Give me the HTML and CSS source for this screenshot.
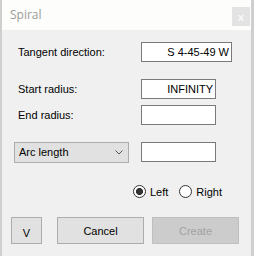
FILE: index.html
```html
<!DOCTYPE html>
<html lang="en">
<head>
    <meta charset="UTF-8">
    <meta name="viewport" content="width=device-width, initial-scale=1.0">
    <title>Spiral</title>
    <link rel="stylesheet" href="styles.css">
</head>
<body>

    <div class="dialog">
        <div class="title-bar">
            <span class="title">Spiral</span>
            <span class="close-btn">x</span>
        </div>

        <div class="content">
            <div class="row">
                <span class="label">Tangent direction:</span>
                <input class="text-box wide" type="text" value="S 4-45-49 W">
            </div>

            <div class="row gap-big">
                <span class="label">Start radius:</span>
                <input class="text-box" type="text" value="INFINITY">
            </div>

            <div class="row gap-small">
                <span class="label">End radius:</span>
                <input class="text-box" type="text" value="">
            </div>

            <div class="row gap-big">
                <div class="combo">
                    <span>Arc length</span>
                    <svg width="8" height="5" viewBox="0 0 8 5">
                        <polyline points="0.5,0.5 4,4 7.5,0.5" fill="none" stroke="#555" stroke-width="1"/>
                    </svg>
                </div>
                <input class="text-box" type="text" value="">
            </div>

            <div class="radio-row">
                <label class="radio"><span class="dot checked"></span>Left</label>
                <label class="radio"><span class="dot"></span>Right</label>
            </div>

            <div class="button-row">
                <button class="btn small">V</button>
                <button class="btn">Cancel</button>
                <button class="btn disabled">Create</button>
            </div>
        </div>
    </div>

</body>
</html>
```

FILE: styles.css
```css
/* Nền phía sau hộp thoại */
body {
    margin: 0;
    background: #cfcfcf;
    font-family: "Liberation Sans", Arial, sans-serif;
    font-size: 11px;
    color: #000;
}

/* Khung hộp thoại */
.dialog {
    margin-left: 2px;
    width: 249px;
    height: 256px;
    background: #f0f0f0;
}

/* Thanh tiêu đề */
.title-bar {
    height: 30px;
    background: #fdfdfb;
    display: flex;
    align-items: center;
    justify-content: space-between;
    padding-left: 8px;
    padding-right: 1px;
    box-sizing: border-box;
}

.title {
    font-family: "Open Sans", sans-serif;
    font-size: 12px;
    color: #9c9c9c;
    margin-top: -1px;
}

.close-btn {
    width: 18px;
    height: 19px;
    background: #e3e3e3;
    color: #f7f7f7;
    font-family: "Open Sans", sans-serif;
    font-size: 11px;
    font-weight: bold;
    display: flex;
    align-items: center;
    justify-content: center;
    margin-top: 3px;
}

.content {
    padding-top: 12px;
}

/* Các dòng nhập liệu */
.row {
    display: flex;
    align-items: center;
    height: 20px;
}

.gap-big {
    margin-top: 17px;
}

.gap-small {
    margin-top: 6px;
}

.label {
    width: 123px;
    margin-left: 16px;
}

.text-box {
    width: 75px;
    height: 20px;
    box-sizing: border-box;
    border: 1px solid #7a7a7a;
    background: #fff;
    font-family: "Liberation Sans", Arial, sans-serif;
    font-size: 11px;
    text-align: right;
    padding: 0 2px;
    margin: 0;
    outline: none;
}

.text-box.wide {
    width: 91px;
}

/* Hộp chọn */
.combo {
    margin-left: 12px;
    margin-right: 12px;
    width: 115px;
    height: 21px;
    box-sizing: border-box;
    border: 1px solid #adadad;
    background: #e1e1e1;
    display: flex;
    align-items: center;
    justify-content: space-between;
    padding: 0 5px 0 4px;
}

/* Nút chọn trái/phải */
.radio-row {
    display: flex;
    margin-top: 23px;
    margin-left: 131px;
    height: 13px;
    align-items: center;
}

.radio {
    display: flex;
    align-items: center;
    margin-right: 11px;
}

.dot {
    width: 13px;
    height: 13px;
    box-sizing: border-box;
    border: 1px solid #333;
    border-radius: 50%;
    background: #fff;
    margin-right: 4px;
}

.dot.checked {
    background: radial-gradient(circle, #333 0, #333 3.3px, #fff 3.8px);
}

/* Hàng nút bấm */
.button-row {
    display: flex;
    margin-top: 19px;
    margin-left: 9px;
}

.btn {
    width: 87px;
    height: 27px;
    box-sizing: border-box;
    border: 1px solid #adadad;
    background: #e1e1e1;
    font-family: "Liberation Sans", Arial, sans-serif;
    font-size: 11px;
    color: #000;
    padding: 0;
    margin-right: 8px;
}

.btn.small {
    width: 31px;
    margin-right: 15px;
    padding-top: 4px;
}

.btn.disabled {
    background: #cccccc;
    border-color: #bfbfbf;
    color: #a2a2a2;
}
```
